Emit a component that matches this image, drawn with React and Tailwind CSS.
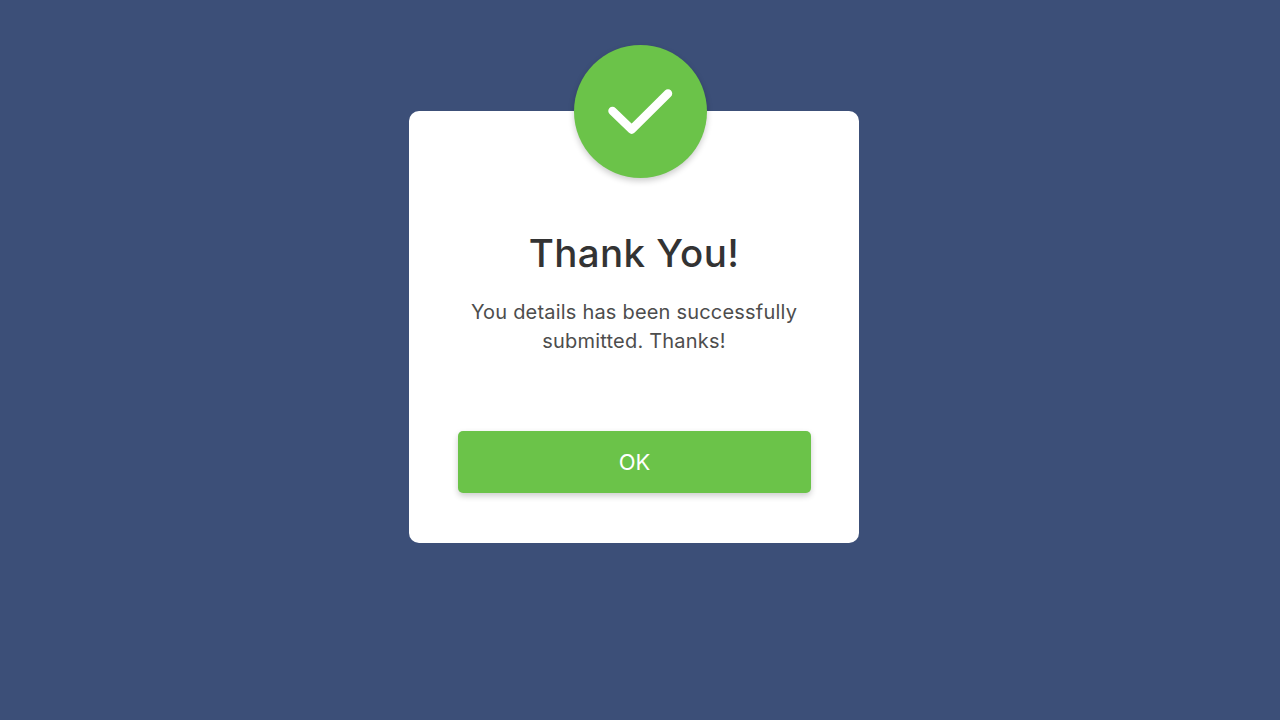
export default function App() {
  return (
    <div className="min-h-screen bg-[#3c4f78] font-['Inter','Open_Sans',sans-serif]">
      <div className="h-[111px]" />
      <div className="relative ml-[409px] w-[450px] h-[432px] rounded-[10px] bg-white px-[49px] pt-[117px] text-center">
        <div className="absolute left-[165px] top-[-66px] w-[133px] h-[133px] rounded-full bg-[#6bc349] shadow-[0_3px_6px_rgba(0,0,0,0.2)]">
          <svg viewBox="0 0 133 133" className="w-full h-full" fill="none">
            <path d="M38.5 66 L57.7 84.5 L94 48.5" stroke="#fff" strokeWidth="8.5" strokeLinecap="round" strokeLinejoin="round" />
          </svg>
        </div>
        <h1 className="text-[38.5px] leading-[50px] font-medium text-[#333] tracking-[0.4px]">Thank You!</h1>
        <p className="mt-[20px] text-[20px] leading-[28.5px] text-[#4d4d4d] tracking-[0.2px] whitespace-nowrap">
          You details has been successfully<br />submitted. Thanks!
        </p>
        <button className="mt-[76px] w-[353px] h-[62px] rounded-[5px] bg-[#6bc349] text-[22px] text-white shadow-[0_3px_6px_rgba(0,0,0,0.2)]">
          OK
        </button>
      </div>
    </div>
  )
}
